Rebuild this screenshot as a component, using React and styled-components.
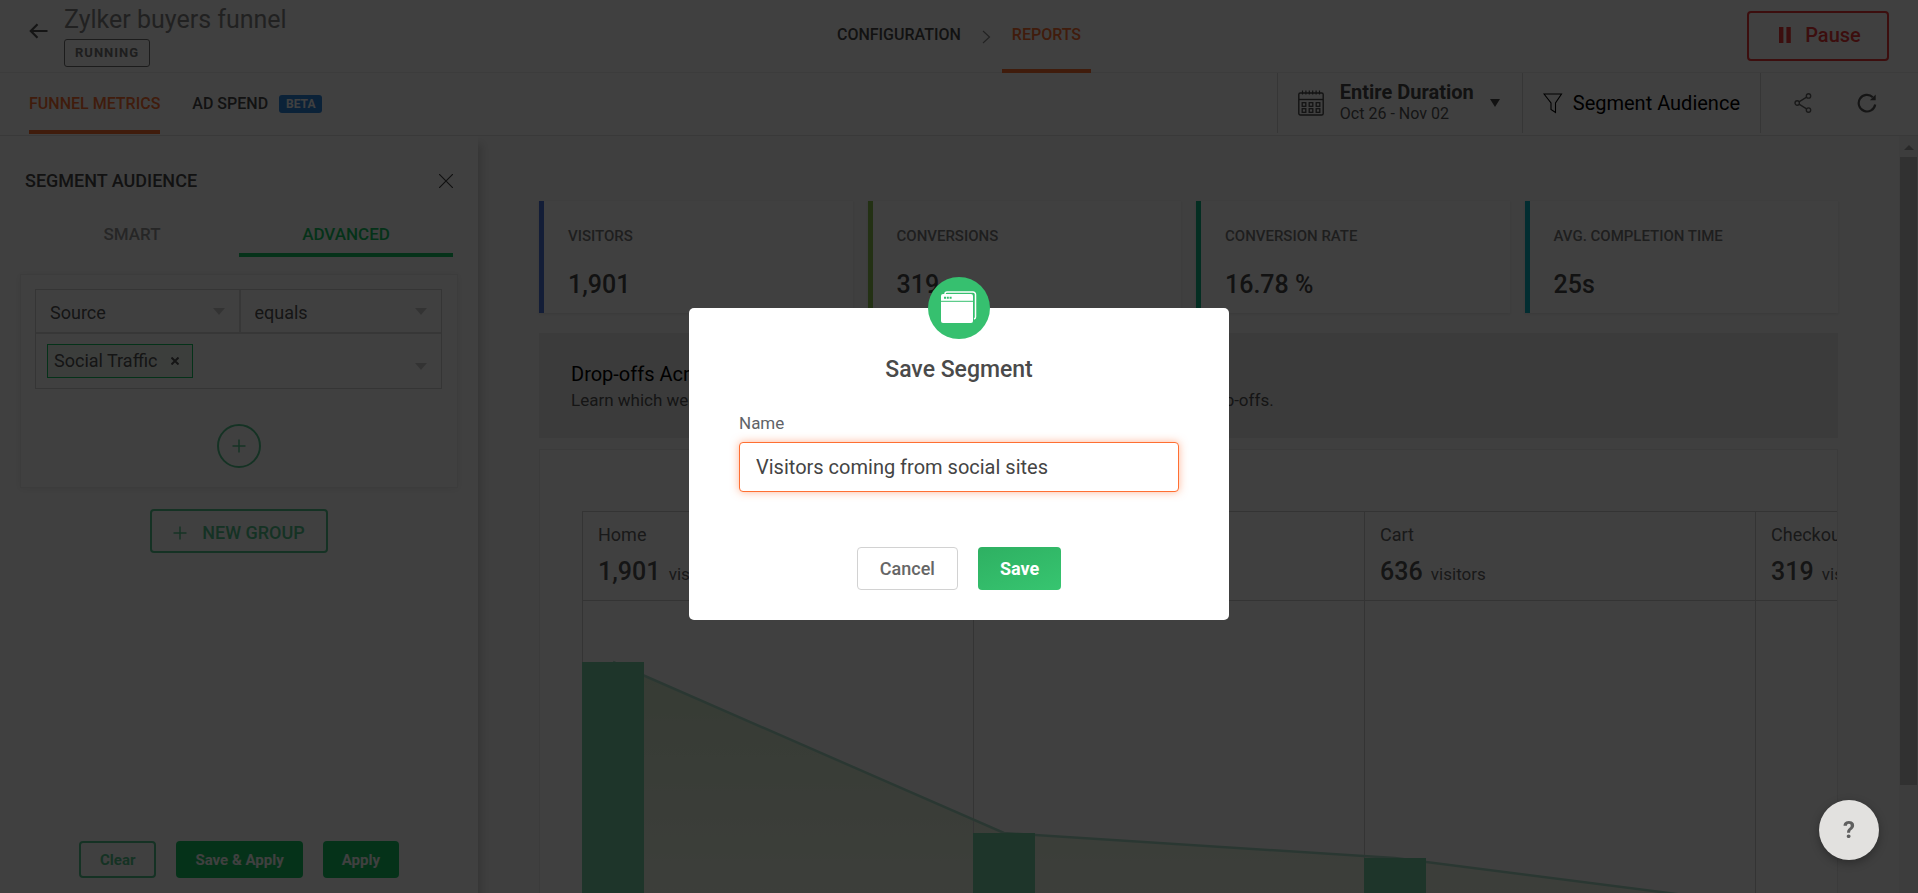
import React, { useState } from "react";
import styled, { createGlobalStyle, css } from "styled-components";

const GlobalStyle = createGlobalStyle`
  * {
    box-sizing: border-box;
  }

  body {
    margin: 0;
    overflow: hidden;
    background: #fff;
    color: #4a4a4a;
    font-family: Roboto, "Liberation Sans", sans-serif;
  }

  button, input, select {
    font-family: inherit;
  }

  h1, h2, p, ul, dl, dd {
    margin: 0;
    padding: 0;
  }
`;

const metrics = [
  { label: "VISITORS", value: "1,901", color: "#4c74d9" },
  { label: "CONVERSIONS", value: "319", color: "#8cc152" },
  { label: "CONVERSION RATE", value: "16.78 %", color: "#12b886" },
  { label: "AVG. COMPLETION TIME", value: "25s", color: "#0ab5c4" },
];

const stages = [
  { name: "Home", visitors: 1901 },
  { name: "Product", visitors: 798 },
  { name: "Cart", visitors: 636 },
  { name: "Checkout", visitors: 319 },
];

const COLUMN = 391;
const BAR = 62;
const CHART_HEIGHT = 356;

function FunnelChart() {
  const points = stages.map((stage, i) => ({
    x: i * COLUMN,
    y: Math.round(CHART_HEIGHT - stage.visitors * 0.155),
  }));
  const line = points.map((p) => `${p.x + BAR / 2},${p.y}`).join(" ");
  const last = points[points.length - 1];

  return (
    <svg width={COLUMN * 4} height={CHART_HEIGHT} aria-hidden="true">
      <defs>
        <linearGradient id="area" gradientUnits="userSpaceOnUse" x1="0" y1="60" x2="0" y2="356">
          <stop offset="0" stopColor="#d6ecce" />
          <stop offset="1" stopColor="#f8fbf0" />
        </linearGradient>
      </defs>
      <polygon
        points={`${points[0].x + BAR / 2},${CHART_HEIGHT} ${line} ${last.x + BAR / 2},${CHART_HEIGHT}`}
        fill="url(#area)"
      />
      {points.map((p) => (
        <rect key={p.x} x={p.x} y="0" width="1" height={CHART_HEIGHT} fill="#d0d0d0" />
      ))}
      <polyline points={line} fill="none" stroke="#a8dcc6" strokeWidth="2.5" />
      {points.map((p) => (
        <rect key={p.x} x={p.x} y={p.y} width={BAR} height={CHART_HEIGHT - p.y} fill="#78d4a6" />
      ))}
    </svg>
  );
}

function PlusIcon() {
  return (
    <svg width="14" height="14" stroke="currentColor" strokeWidth="1.5">
      <path d="M7 0.5v13M0.5 7h13" />
    </svg>
  );
}

function CalendarIcon() {
  return (
    <svg width="26" height="26" fill="none" stroke="#4a4a4a">
      <rect x="0.8" y="3" width="24.4" height="22" rx="1.5" strokeWidth="1.4" />
      <path d="M1 9.5h24" strokeWidth="1.4" />
      <path d="M4.5 0.5v4M7.9 0.5v4M11.3 0.5v4M14.7 0.5v4M18.1 0.5v4M21.5 0.5v4" strokeWidth="1.2" />
      {[5, 12, 19].map((x) => (
        <React.Fragment key={x}>
          <rect x={x - 0.8} y="12.7" width="3.6" height="3.6" strokeWidth="1.3" />
          <rect x={x - 0.8} y="18.7" width="3.6" height="3.6" strokeWidth="1.3" />
        </React.Fragment>
      ))}
    </svg>
  );
}

export default function App() {
  const [name, setName] = useState("Visitors coming from social sites");

  return (
    <>
      <GlobalStyle />
      <Page>
        <Header>
          <Heading>
            <IconButton aria-label="Back">
              <svg width="20" height="16" fill="none" stroke="#555" strokeWidth="2.2">
                <path d="M18.5 8H2M8.5 1.2L1.8 8l6.7 6.8" />
              </svg>
            </IconButton>
            <div>
              <Title>Zylker buyers funnel</Title>
              <Status>RUNNING</Status>
            </div>
          </Heading>
          <Steps>
            <Step href="#configuration">CONFIGURATION</Step>
            <svg width="9" height="14" fill="none" stroke="#888" strokeWidth="1.2">
              <path d="M1 1l6.5 6L1 13" />
            </svg>
            <Step href="#reports" $active>
              REPORTS
            </Step>
          </Steps>
          <PauseButton>
            <svg width="12" height="16" fill="currentColor">
              <path d="M0 0h4.4v16H0zM7.4 0h4.4v16H7.4z" />
            </svg>
            Pause
          </PauseButton>
        </Header>

        <SubHeader>
          <Tabs>
            <Tab href="#metrics" $active>
              FUNNEL METRICS
            </Tab>
            <Tab href="#spend">
              AD SPEND <Beta>BETA</Beta>
            </Tab>
          </Tabs>
          <Tools>
            <DateButton>
              <CalendarIcon />
              <span>
                <DateTitle>Entire Duration</DateTitle>
                <DateRange>Oct 26 - Nov 02</DateRange>
              </span>
              <svg width="10" height="8" fill="#4a4a4a">
                <path d="M0 0h10L5 8z" />
              </svg>
            </DateButton>
            <SegmentButton>
              <svg width="20" height="21" fill="none" stroke="#000" strokeWidth="1.1">
                <path d="M1 1h17.5l-6 9v9.5l-4.5-3V10z" />
              </svg>
              Segment Audience
            </SegmentButton>
            <IconTools>
              <IconButton aria-label="Share">
                <svg width="18" height="20" fill="none" stroke="#666" strokeWidth="1.4">
                  <circle cx="3.2" cy="10" r="2.2" />
                  <circle cx="14.5" cy="2.9" r="2.2" />
                  <circle cx="14.5" cy="17.1" r="2.2" />
                  <path d="M5 8.800l7.6-4.7M5 11.2l7.6 4.7" />
                </svg>
              </IconButton>
              <IconButton aria-label="Refresh">
                <svg width="20" height="20" fill="none" stroke="#555" strokeWidth="2.2">
                  <path d="M18.2 11.5A8.3 8.3 0 1 1 15.8 4.2" />
                  <path d="M18.7 1.5v5.8h-5.8z" fill="#555" stroke="none" />
                </svg>
              </IconButton>
            </IconTools>
          </Tools>
        </SubHeader>

        <Body>
          <Sidebar>
            <SidebarHead>
              <SidebarTitle>SEGMENT AUDIENCE</SidebarTitle>
              <IconButton aria-label="Close">
                <svg width="14" height="14" stroke="#444" strokeWidth="1.2">
                  <path d="M0 0l14 14M14 0L0 14" />
                </svg>
              </IconButton>
            </SidebarHead>
            <Modes>
              <Mode>SMART</Mode>
              <Mode $active>ADVANCED</Mode>
            </Modes>
            <Group>
              <Rule>
                <RuleRow>
                  <Dropdown>
                    <Select aria-label="Attribute">
                      <option>Source</option>
                    </Select>
                    <Caret />
                  </Dropdown>
                  <Dropdown>
                    <Select aria-label="Condition">
                      <option>equals</option>
                    </Select>
                    <Caret />
                  </Dropdown>
                </RuleRow>
                <TagRow>
                  <Tag>
                    Social Traffic
                    <IconButton aria-label="Remove Social Traffic">
                      <svg width="8" height="8" stroke="#555" strokeWidth="2">
                        <path d="M0.5 0.5l7 7M7.5 0.5l-7 7" />
                      </svg>
                    </IconButton>
                  </Tag>
                  <IconButton aria-label="Show values">
                    <Caret />
                  </IconButton>
                </TagRow>
              </Rule>
              <AddButton aria-label="Add condition">
                <PlusIcon />
              </AddButton>
            </Group>
            <NewGroup>
              <PlusIcon />
              NEW GROUP
            </NewGroup>
            <SidebarActions>
              <SmallButton $outline>Clear</SmallButton>
              <SmallButton>Save &amp; Apply</SmallButton>
              <SmallButton>Apply</SmallButton>
            </SidebarActions>
          </Sidebar>

          <Content>
            <Metrics>
              {metrics.map((metric) => (
                <Metric key={metric.label} $color={metric.color}>
                  <MetricLabel>{metric.label}</MetricLabel>
                  <MetricValue>{metric.value}</MetricValue>
                </Metric>
              ))}
            </Metrics>
            <Banner>
              <BannerTitle>Drop-offs Across Funnel Stages</BannerTitle>
              <BannerText>
                Learn which webpages your visitors leave from, and find out the
                ways to reduce the drop-offs.
              </BannerText>
            </Banner>
            <ChartCard>
              <ChartScroller>
                <Stages>
                  {stages.map((stage) => (
                    <Stage key={stage.name}>
                      <StageName>{stage.name}</StageName>
                      <StageCount>
                        <Count>{stage.visitors.toLocaleString("en-US")}</Count>{" "}
                        visitors
                      </StageCount>
                    </Stage>
                  ))}
                </Stages>
                <FunnelChart />
              </ChartScroller>
            </ChartCard>
          </Content>

          <ScrollTrack>
            <svg width="10" height="5" fill="#a3a3a3">
              <path d="M0 5h10L5 0z" />
            </svg>
            <ScrollThumb />
          </ScrollTrack>
        </Body>
      </Page>

      <Overlay>
        <Modal role="dialog" aria-labelledby="modal-title">
          <ModalIcon>
            <svg width="38" height="34" viewBox="0 0 38 34" fill="none">
              <path
                d="M5 3.2V3a2 2 0 0 1 2-2h26a2.5 2.5 0 0 1 2.5 2.5V26a2 2 0 0 1-1.5 2"
                stroke="#fff"
                strokeWidth="1.5"
              />
              <rect x="1" y="3" width="32" height="29" rx="2" fill="#fff" />
              <path d="M1 10.3h32" stroke="#36c06f" />
              <path d="M4 5.8h2v2h-2zM6.8 5.8h2v2h-2zM9.6 5.8h2v2h-2z" fill="#36c06f" />
            </svg>
          </ModalIcon>
          <ModalTitle id="modal-title">Save Segment</ModalTitle>
          <Label htmlFor="segment-name">Name</Label>
          <Input
            id="segment-name"
            value={name}
            onChange={(e) => setName(e.target.value)}
          />
          <ModalActions>
            <CancelButton>Cancel</CancelButton>
            <SaveButton>Save</SaveButton>
          </ModalActions>
        </Modal>
      </Overlay>
      <HelpButton aria-label="Help">?</HelpButton>
    </>
  );
}

const Page = styled.div`
  display: flex;
  flex-direction: column;
  height: 100vh;
  overflow: hidden;
`;

const Header = styled.header`
  display: grid;
  grid-template-columns: 1fr auto 1fr;
  align-items: center;
  height: 73px;
  padding: 0 29px;
  border-bottom: 1px solid #eee;
`;

const IconButton = styled.button`
  display: flex;
  padding: 0;
  border: 0;
  background: none;
`;

const Heading = styled.div`
  display: flex;
  align-items: flex-start;
  gap: 15px;

  > button {
    padding-top: 18px;
  }
`;

const Title = styled.h1`
  margin-bottom: 4px;
  color: #858585;
  font-size: 25px;
  font-weight: 400;
  line-height: 30px;
`;

const Status = styled.span`
  display: inline-block;
  padding: 0 10px;
  border: 1px solid #6f6f6f;
  border-radius: 3px;
  color: #777;
  font-size: 13px;
  font-weight: 700;
  line-height: 26px;
  letter-spacing: 1px;
  vertical-align: top;
`;

const Steps = styled.nav`
  display: flex;
  align-items: center;
  gap: 11px;
  height: 73px;
  margin-bottom: -1px;
`;

const Step = styled.a`
  height: 100%;
  padding: 0 10px;
  border-bottom: 4px solid ${({ $active }) => ($active ? "#ff6f32" : "transparent")};
  color: ${({ $active }) => ($active ? "#ff6f32" : "#4a4a4a")};
  font-size: 16px;
  font-weight: 500;
  line-height: 70px;
  text-decoration: none;
`;

const PauseButton = styled.button`
  display: flex;
  align-items: center;
  justify-content: center;
  justify-self: end;
  gap: 14px;
  width: 142px;
  height: 50px;
  padding: 0 6px 2px 10px;
  border: 2px solid #ee3a3a;
  border-radius: 4px;
  background: none;
  color: #ee3a3a;
  font-size: 20px;
  font-weight: 500;
`;

const SubHeader = styled.div`
  display: flex;
  justify-content: space-between;
  height: 63px;
  padding-left: 29px;
  border-bottom: 1px solid #e4e4e4;
`;

const Tabs = styled.nav`
  display: flex;
  gap: 32px;
  height: 61px;
`;

const Tab = styled.a`
  display: flex;
  align-items: center;
  gap: 11px;
  padding-top: 4px;
  border-bottom: 4px solid ${({ $active }) => ($active ? "#ff6f32" : "transparent")};
  color: ${({ $active }) => ($active ? "#ff6f32" : "#4a4a4a")};
  font-size: 16px;
  font-weight: 500;
  text-decoration: none;
`;

const Beta = styled.span`
  padding: 0 7px;
  border-radius: 3px;
  background: #2e86de;
  color: #fff;
  font-size: 12px;
  font-weight: 700;
  line-height: 18px;
`;

const Tools = styled.div`
  display: flex;
  height: 60px;
`;

const toolStyles = css`
  display: flex;
  align-items: center;
  padding: 0 20px;
  border: 0;
  border-left: 1px solid #d8d8d8;
  background: none;
`;

const DateButton = styled.button`
  ${toolStyles}
  gap: 16px;
  padding-right: 22px;
  color: #555;
  text-align: left;
`;

const DateTitle = styled.span`
  display: block;
  color: #4a4a4a;
  font-size: 20px;
  font-weight: 700;
  line-height: 22px;
`;

const DateRange = styled.span`
  display: block;
  font-size: 16px;
  line-height: 22px;
`;

const SegmentButton = styled.button`
  ${toolStyles}
  gap: 10px;
  color: #000;
  font-size: 20px;
`;

const IconTools = styled.div`
  ${toolStyles}
  gap: 45px;
  padding: 0 41px 0 33px;
`;

const Body = styled.div`
  display: flex;
  flex: 1;
  min-height: 0;
`;

const Sidebar = styled.aside`
  display: flex;
  flex-direction: column;
  flex: 0 0 478px;
  box-shadow: 4px 8px 8px rgba(0, 0, 0, 0.15);
  z-index: 1;
`;

const SidebarHead = styled.div`
  display: flex;
  align-items: center;
  justify-content: space-between;
  padding: 34px 25px 22px;
`;

const SidebarTitle = styled.h2`
  font-size: 18px;
  font-weight: 500;
  line-height: 22px;
`;

const Modes = styled.div`
  display: grid;
  grid-template-columns: 1fr 1fr;
  padding: 0 25px;
`;

const Mode = styled.button`
  height: 43px;
  padding: 0;
  border: 0;
  border-bottom: 4px solid ${({ $active }) => ($active ? "#14c864" : "transparent")};
  background: none;
  color: ${({ $active }) => ($active ? "#14c864" : "#999")};
  font-size: 17px;
  font-weight: 500;
`;

const Group = styled.section`
  display: flex;
  flex-direction: column;
  align-items: center;
  gap: 35px;
  margin: 17px 20px 21px;
  padding: 14px 15px 19px 14px;
  border: 1px solid #f0f0f0;
  box-shadow: 0 1px 8px rgba(0, 0, 0, 0.08);
`;

const Rule = styled.div`
  width: 100%;
  border: 1px solid #d4d4d4;
`;

const RuleRow = styled.div`
  display: grid;
  grid-template-columns: 1fr 1fr;
  border-bottom: 2px solid #dcdcdc;
`;

const Dropdown = styled.div`
  display: flex;
  align-items: center;
  padding-right: 14px;

  & + & {
    border-left: 2px solid #dcdcdc;
  }
`;

const Select = styled.select`
  flex: 1;
  height: 42px;
  padding: 2px 0 0 14px;
  border: 0;
  background: none;
  color: #555;
  font-size: 18px;
  appearance: none;
`;

const Caret = styled.span`
  border: 6px solid transparent;
  border-top: 7px solid #ccc;
  border-bottom: 0;
`;

const TagRow = styled.div`
  display: flex;
  align-items: center;
  justify-content: space-between;
  height: 54px;
  padding: 0 14px 0 11px;

  > button {
    padding-top: 10px;
  }
`;

const Tag = styled.span`
  display: flex;
  align-items: center;
  gap: 14px;
  padding: 0 13px 0 6px;
  border: 1px solid #14c864;
  background: #eef7f0;
  color: #555;
  font-size: 18px;
  line-height: 32px;
`;

const greenOutline = css`
  display: flex;
  align-items: center;
  justify-content: center;
  border: 2px solid #56c890;
  background: none;
  color: #56c890;
`;

const AddButton = styled.button`
  ${greenOutline}
  width: 44px;
  height: 44px;
  padding: 0;
  border-radius: 50%;
`;

const NewGroup = styled.button`
  ${greenOutline}
  align-self: center;
  gap: 15px;
  width: 178px;
  height: 44px;
  padding-top: 4px;
  border-radius: 4px;
  font-size: 18px;
  font-weight: 500;
`;

const SidebarActions = styled.div`
  display: flex;
  justify-content: center;
  gap: 20px;
  margin-top: auto;
  padding-bottom: 15px;
`;

const SmallButton = styled.button`
  height: 37px;
  padding: 0 19px;
  border: ${({ $outline }) => ($outline ? "2px solid #56c890" : "0")};
  border-radius: 4px;
  background: ${({ $outline }) => ($outline ? "none" : "#14c864")};
  color: ${({ $outline }) => ($outline ? "#56c890" : "#fff")};
  font-size: 15px;
  font-weight: 700;
`;

const Content = styled.main`
  flex: 1;
  min-width: 0;
  padding: 65px 61px 0;
  background: #fafafa;
  overflow: hidden;
`;

const Metrics = styled.div`
  display: grid;
  grid-template-columns: repeat(4, 1fr);
  gap: 15px;
`;

const Metric = styled.dl`
  height: 112px;
  padding: 25px 24px 0;
  border-left: 5px solid ${({ $color }) => $color};
  background: #fff;
  box-shadow: 0 1px 3px rgba(0, 0, 0, 0.1);
`;

const MetricLabel = styled.dt`
  margin-bottom: 24px;
  color: #7a7a7a;
  font-size: 15px;
  font-weight: 500;
  line-height: 20px;
`;

const MetricValue = styled.dd`
  font-size: 25px;
  font-weight: 500;
  line-height: 30px;
`;

const Banner = styled.section`
  margin: 20px 0 11px;
  padding: 27px 32px 25px;
  background: #ebebeb;
`;

const BannerTitle = styled.h2`
  color: #000;
  font-size: 20px;
  font-weight: 400;
  line-height: 28px;
`;

const BannerText = styled.p`
  color: #555;
  font-size: 17px;
  line-height: 25px;
`;

const ChartCard = styled.section`
  padding: 61px 0 0 42px;
  border: 1px solid #ececec;
  background: #fff;
`;

const ChartScroller = styled.div`
  overflow: hidden;
`;

const Stages = styled.ul`
  display: flex;
  border: 1px solid #d0d0d0;
  border-width: 1px 0;
  list-style: none;
`;

const Stage = styled.li`
  flex: 0 0 391px;
  height: 88px;
  padding: 11px 15px 0;
  border-left: 1px solid #d0d0d0;
  color: #666;
  font-size: 18px;
`;

const StageName = styled.p`
  margin-bottom: 10px;
  line-height: 24px;
`;

const StageCount = styled.p`
  font-size: 17px;
`;

const Count = styled.strong`
  margin-right: 4px;
  color: #555;
  font-size: 25px;
  font-weight: 500;
`;

const ScrollTrack = styled.div`
  display: flex;
  flex-direction: column;
  align-items: center;
  gap: 7px;
  flex: 0 0 19px;
  padding-top: 9px;
  background: #f1f1f1;
`;

const ScrollThumb = styled.div`
  width: 17px;
  height: 84%;
  background: #c1c1c1;
`;

const Overlay = styled.div`
  position: fixed;
  inset: 0;
  z-index: 10;
  display: flex;
  align-items: flex-start;
  justify-content: center;
  padding-top: 308px;
  background: rgba(0, 0, 0, 0.75);
`;

const Modal = styled.div`
  position: relative;
  display: flex;
  flex-direction: column;
  width: 540px;
  padding: 48px 50px 30px;
  border-radius: 5px;
  background: #fff;
`;

const ModalIcon = styled.span`
  position: absolute;
  top: -31px;
  left: 50%;
  display: flex;
  align-items: center;
  justify-content: center;
  width: 62px;
  height: 62px;
  margin-left: -31px;
  border-radius: 50%;
  background: #36c06f;
`;

const ModalTitle = styled.h2`
  margin-bottom: 27px;
  font-size: 23px;
  font-weight: 500;
  line-height: 28px;
  text-align: center;
`;

const Label = styled.label`
  margin-bottom: 7px;
  color: #5f6368;
  font-size: 17px;
  line-height: 24px;
`;

const Input = styled.input`
  width: 100%;
  height: 50px;
  margin-bottom: 55px;
  padding: 0 16px;
  border: 1px solid #ff6f32;
  border-radius: 4px;
  outline: 0;
  background: #fff;
  box-shadow: 0 0 8px rgba(255, 111, 50, 0.5);
  color: #444;
  font-size: 20px;
`;

const ModalActions = styled.div`
  display: flex;
  justify-content: center;
  gap: 20px;
`;

const ModalButton = styled.button`
  height: 43px;
  padding: 0 22px;
  border: 1px solid #d2d2d2;
  border-radius: 4px;
  font-size: 18px;
`;

const CancelButton = styled(ModalButton)`
  background: #fff;
  color: #666;
  font-weight: 500;
`;

const SaveButton = styled(ModalButton)`
  border: 0;
  background: linear-gradient(160deg, #2eb062, #37c570);
  color: #fff;
  font-weight: 700;
`;

const HelpButton = styled.button`
  position: fixed;
  right: 39px;
  bottom: 33px;
  z-index: 11;
  width: 60px;
  height: 60px;
  border: 0;
  border-radius: 50%;
  background: #e2e1df;
  box-shadow: 0 3px 10px rgba(0, 0, 0, 0.3);
  color: #5f5f5f;
  font-size: 24px;
  font-weight: 700;
`;
